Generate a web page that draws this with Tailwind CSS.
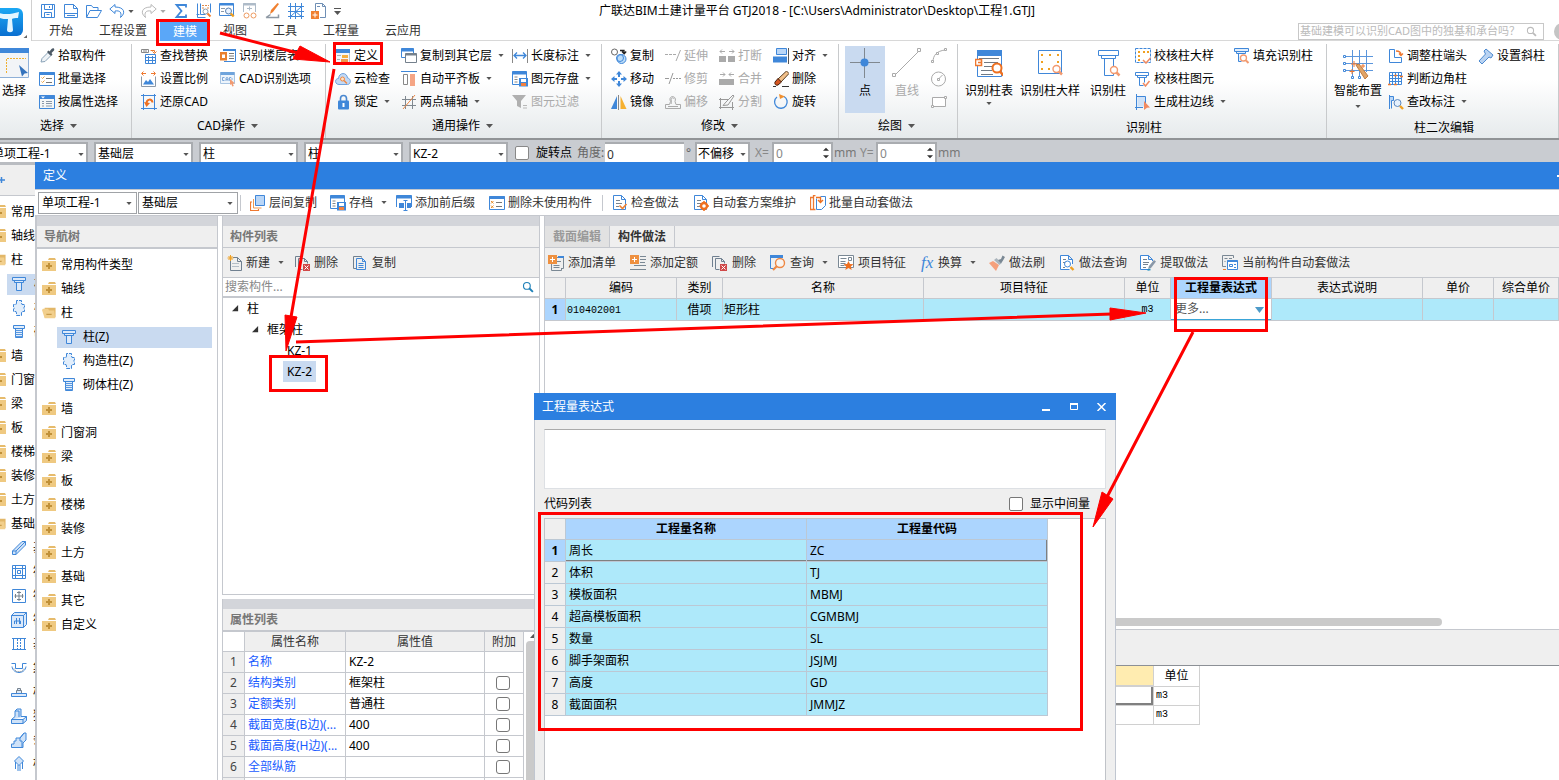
<!DOCTYPE html>
<html lang="zh-CN">
<head>
<meta charset="utf-8">
<title>广联达BIM土建计量平台 GTJ2018</title>
<script src="https://cdn.jsdelivr.net/npm/@tailwindcss/browser@4"></script>
</head>
<body class="relative flex h-screen w-full flex-col overflow-hidden bg-white font-['Noto_Sans','Noto_Sans_CJK_SC',sans-serif] text-[12px] leading-[16px] text-black">

<svg class="hidden">
<defs>
<symbol id="dd" viewBox="0 0 7 4"><path d="M0 0h7L3.500 4z" fill="#555"/></symbol>
<symbol id="save" viewBox="0 0 16 16" fill="none" stroke="#3f87d9"><path d="M1.500 1.500h13v13h-13zM4.500 1.500v5h8v-5M4.500 14.500v-5h7v5M9.500 3v2M6.500 11.500h3"/></symbol>
<symbol id="page" viewBox="0 0 16 16" fill="none" stroke="#3f87d9"><path d="M1.500 1.500h9l4 4v9h-13zM10.500 1.500v4h4M1.500 10.500h13M4 12.500h8"/></symbol>
<symbol id="open" viewBox="0 0 16 16" fill="none" stroke="#3f87d9"><path d="M.500 14V2.500h5l1.500 2h5v3M.500 14.500 4 7.500h11.500l-4 7z"/></symbol>
<symbol id="undo" viewBox="0 0 16 16" fill="none" stroke="#3f87d9"><path d="M6 1.500.800 6 6 10.500V8c5-.800 7 1.500 5.500 6.500C17 10 15.500 4 6 4z"/></symbol>
<symbol id="redo" viewBox="0 0 16 16" fill="none" stroke="#b9b9b9"><path d="M10 1.500 15.200 6 10 10.500V8c-5-.800-7 1.500-5.500 6.500C-1 10 .500 4 10 4z"/></symbol>
<symbol id="sum" viewBox="0 0 16 16" fill="none" stroke="#3f87d9" stroke-width="1.800"><path d="M13 4.500V2H3.500l5 6-5 6H13v-2.500"/></symbol>
<symbol id="qfind" viewBox="0 0 16 16" fill="none" stroke="#3f87d9"><path d="M1.500.500v14h8M4.500.500v11h5M.500 11.500h3M14.500.500v9"/><path d="M6 2.500h7M6 5h3M11 5h2" stroke="#e08a4a" stroke-dasharray="2 1"/><circle cx="9.500" cy="8.500" r="2.500" stroke="#8a98a8"/><path d="m11.500 10.500 3 3" stroke="#f08030" stroke-width="2"/></symbol>
<symbol id="qwin" viewBox="0 0 16 16" fill="none" stroke="#3f87d9"><path d="M.500.500h14v12H.500z"/><path d="M.500 1.500h14" stroke-width="2"/><path d="M2 5.500h4M2 8.500h3" stroke="#8a98a8"/><circle cx="9.500" cy="8" r="3" stroke="#5a80b0" fill="#eaf3ff"/><path d="m11.700 10.500 3 3" stroke="#f0a020" stroke-width="2.400"/></symbol>
<symbol id="glass" viewBox="0 0 16 16" fill="none" stroke="#aebbc8"><path d="M1.500 9V.500h12V9"/><path d="M1 1.500h13" stroke-width="2"/><path d="M5 5.500h5M7.500 3.500v4" /><circle cx="4.500" cy="12.500" r="2.500" stroke="#ee9a60"/><circle cx="11.500" cy="12.500" r="2.500" stroke="#ee9a60"/></symbol>
<symbol id="brush" viewBox="0 0 16 16"><path d="M14 1 8 9l-3 2 1-4 6.500-7z" fill="#f08030"/><path d="M1 14.500h12.500v-3M1 14.500l4.500-3" stroke="#8d98a3" fill="none" stroke-width="1.500"/></symbol>
<symbol id="mesh" viewBox="0 0 16 16" fill="none" stroke="#3f87d9"><path d="M2.500 0v16M7.500 0v16M13.500 0v16M0 3.500h16M0 8.500h16M0 13.500h16M2.500 13.500l11-10M7.500 8.500l6 5"/></symbol>
<symbol id="docplus" viewBox="0 0 16 16" fill="none" stroke="#6f8fb5"><path d="M4.500 8V.500h7l3 3v11H9M11.500.500v3h3M6 3.500h3"/><path d="M0 8h8v8H0z" fill="#f08030" stroke="none"/><path d="M4 9.500v5M1.500 12h5" stroke="#fff"/></symbol>
<symbol id="pick" viewBox="0 0 16 16"><path d="M2 14l1-3.500 6-6 3 3-6 6z" fill="#eef3f7" stroke="#8aa3b8"/><path d="m8 4 4 4 1.500-1.500L12.500 5 15 2.500c1-2-1-3-2.500-1.500L10.500 3.500 9.500 2.500z" fill="#4d5a66"/></symbol>
<symbol id="list" viewBox="0 0 16 16" fill="none" stroke="#3f87d9"><path d="M.500 1.500h15v13H.500z"/><path d="M.500 2.500h15" stroke-width="3"/><path d="m2.500 6.500 1 1 2-2M2.500 10.500l1 1 2-2" stroke="#e8a040"/><path d="M7 7.500h6M7 11.500h6" stroke="#777"/></symbol>
<symbol id="list2" viewBox="0 0 16 16" fill="none" stroke="#3f87d9"><path d="M.500 1.500h15v13H.500z"/><path d="M.500 3h15" stroke-width="4"/><path d="M2 2.500h4L4 4.500z" fill="#fff" stroke="none"/><path d="M3 7.500h2M7 7.500h6M3 9.500h2M7 9.500h6M3 12h2M7 12h6" stroke="#8a98a8"/></symbol>
<symbol id="replace" viewBox="0 0 16 16" fill="none" stroke="#3f87d9"><path d="M.500 1.500h7v3h-7zM3 1.500v3M5 1.500v3" stroke="#888"/><path d="M9.500 2.500h4v2M11.500 3.500l2 2 2-2" stroke="#e87a30"/><path d="M4.500 6.500h10v9h-10zM4.500 9.500h10M4.500 12.500h10M7.500 8v8M11.500 8v8"/></symbol>
<symbol id="scale" viewBox="0 0 16 16" fill="none" stroke="#8a98a8"><path d="M.500 5.500v10h14v-10"/><path d="M2 13.500 5 9l2 2 2-3 4 5.500z" fill="#3f87d9" stroke="none"/><path d="M5 2.500H1m1.500-2-2 2 2 2M10 2.500h4m-1.500-2 2 2-2 2" stroke="#ee7830"/></symbol>
<symbol id="restore" viewBox="0 0 16 16" fill="none" stroke="#3f87d9"><path d="M2.500 0v16M0 1.500h15M13.500 0v16M0 14.500h16"/><path d="M5.500 9.500C5.500 5 11 4 11.500 8.500" stroke="#ee7020" stroke-width="2"/><path d="m3 8 2.500 5L9 9z" fill="#ee7020" stroke="none"/></symbol>
<symbol id="floor" viewBox="0 0 16 16" fill="none" stroke="#3f87d9"><path d="M3.500 1.500h12v12H4"/><path d="M3 2h13" stroke-width="2"/><path d="M9 5.500h5M9 8h5M9 10.500h5" stroke="#777"/><path d="M0 4h7v8.500H0z" fill="#e8802f" stroke="none"/><path d="M2 6.500h3v3.500H2z" fill="#fff" stroke="none"/></symbol>
<symbol id="cadopt" viewBox="0 0 16 16" fill="none" stroke="#a8c4e2"><path d="M.500 1.500h14v11H.500z" fill="#edf4fb"/><path d="M.500 2.500h14" stroke-width="3" stroke="#6fa4dc"/><path d="M4.500 6.500h-2v3h2M6 10V7l1-.500L8 7v3M6 8.500h2M9.500 6.500h1.500l1 1v1l-1 1H9.500z" stroke="#7fa8d8"/><path d="m10 8 5 4.500h-2.200l1 2.500-1.500.500-1-2.500-1.300 1z" fill="#f29a70" stroke="none"/></symbol>
<symbol id="defn" viewBox="0 0 16 16"><path d="M0 1h15v4H0z" fill="#3f87d9"/><path d="M.500 5v9.500h14V5" fill="#f3f6fa" stroke="#b8c2cc"/><path d="M2 7.500h4M2 11.500h3" stroke="#a8b2bc"/><path d="M7 7h6v3H7z" fill="#f6b040"/><path d="M6 11h7v3H6z" fill="#ee9850"/></symbol>
<symbol id="cloud" viewBox="0 0 16 16"><path d="M4 13.500c-4.500 0-4.500-6-.500-6C4 1 12 1 12.500 7c4 .500 3.500 6.500 0 6.500z" fill="#c2d9f5" stroke="#6fa2de"/><circle cx="7.500" cy="8" r="2" fill="#ffe1c4" stroke="#ee8844"/><path d="m9 9.500 3 3" stroke="#ee8844" stroke-width="1.500"/></symbol>
<symbol id="lock" viewBox="0 0 16 16"><path d="M5.500 8V4.500c0-4 6-4 6 0V8" fill="none" stroke="#4a88d0" stroke-width="1.600"/><rect x="3" y="6.500" width="11" height="9" rx="1" fill="#3f87d9"/><path d="M8.500 9v4" stroke="#fff" stroke-width="2"/></symbol>
<symbol id="copyfl" viewBox="0 0 16 16" fill="#fff" stroke="#3f87d9"><path d="M.500.500h12v9H.500z"/><path d="M.500 2h12" stroke-width="3"/><path d="M4.500 5.500h11v9h-11z" stroke="#74808c"/><path d="M4.500 6.500h11" stroke="#74808c" stroke-width="2"/></symbol>
<symbol id="align1" viewBox="0 0 16 16" fill="none"><path d="M0 .500h16" stroke="#3f87d9"/><path d="M2.500 3.500h4v10h-4z" stroke="#888"/><path d="M9 3h5v12H9z" fill="#f5a585"/></symbol>
<symbol id="axis" viewBox="0 0 16 16" stroke="#808890" fill="none"><path d="M4.500 2v13M11.500 2v13M1 5.500h14M1 11.500h14"/><path d="M2 15 14 1" stroke="#ee8844"/></symbol>
<symbol id="dimen" viewBox="0 0 16 16" fill="none"><path d="M.500 1v14M15.500 1v14" stroke="#888"/><path d="M2 7.500h12M5 4.500l-3 3 3 3M11 4.500l3 3-3 3" stroke="#3f87d9" stroke-width="1.300"/></symbol>
<symbol id="store" viewBox="0 0 16 16" fill="none" stroke="#3f87d9"><path d="M.500.500h14v13H.500z"/><path d="M.500 2h14" stroke-width="3"/><path d="M2.500 6h3M2.500 8.500h3M2.500 11h3" stroke="#888"/><path d="M7 7h9v8.500H7z" fill="#3f87d9" stroke="none"/><path d="M9 8h5v3H9z" fill="#fff" stroke="none"/><path d="M9 12h5v3H9z" fill="#f08040" stroke="none"/></symbol>
<symbol id="filter" viewBox="0 0 16 16"><path d="M0 1h14L9 7v7l-4-2V7z" fill="#b0b0b0"/><path d="M11 11.500h4M11 14h4" stroke="#b8b8b8"/></symbol>
<symbol id="copy2" viewBox="0 0 16 16" fill="none"><circle cx="3.500" cy="4" r="3" stroke="#666"/><path d="M9 2.500h4v3M11 3.500l2.200 2.200 2-2.200" stroke="#222" stroke-width="1.300"/><circle cx="10.500" cy="11" r="4.500" fill="#bcdcf8" stroke="#3f87d9"/><circle cx="9" cy="10" r="3.500" stroke="#3f87d9"/></symbol>
<symbol id="move" viewBox="0 0 16 16" fill="#3f87d9"><path d="m8 0 3 3.500H9V6H7V3.500H5zM8 16l3-3.500H9V10H7v2.500H5zM0 8l3.500-3v2H6v2H3.500v2zM16 8l-3.500-3v2H10v2h2.500v2z"/></symbol>
<symbol id="mirror" viewBox="0 0 16 16"><path d="M6 2v13H0z" fill="#3f87d9"/><path d="M9.500 2v13h6z" fill="#f5b030"/><path d="M7.500 1v15" stroke="#888"/></symbol>
<symbol id="ext" viewBox="0 0 16 16" stroke="#aaa" fill="none"><path d="M0 6.500h3M4 6.500h3M8 6.500h3M11 13l4.500-11"/></symbol>
<symbol id="trim" viewBox="0 0 16 16" stroke="#999" fill="none"><path d="M0 7.500h4M4 13 8 2M8 7.500h2M11 7.500h2M14 7.500h2"/></symbol>
<symbol id="offs" viewBox="0 0 16 16" stroke="#aaa" fill="none"><path d="M.500 14.500v-4h4l1-3C2.500 1 12.500 1 10 7.500l1 3h4.500v4zM3 12.500h10M6 10c1-2 0-4 0-5 1-2 3-1 3 0"/></symbol>
<symbol id="brk" viewBox="0 0 16 16" fill="#aaa"><path d="M0 8h7v6H0zM9 8h7v6H9z"/><path d="M6 3.500H1m2-2-2 2 2 2M10 3.500h5m-2-2 2 2-2 2" stroke="#aaa" fill="none"/></symbol>
<symbol id="merge" viewBox="0 0 16 16" fill="#aaa"><path d="M0 8h15v6H0z"/><path d="M1 3.500h5m-2-2 2 2-2 2M15 3.500h-5m2-2-2 2 2 2" stroke="#aaa" fill="none"/></symbol>
<symbol id="split" viewBox="0 0 16 16" stroke="#999" fill="none"><path d="M1.500 4v11M0 5.500h9M0 13.500h15M13.500 8v8M4 11.500 9 11l6-9-1-1-7 7z"/></symbol>
<symbol id="algn" viewBox="0 0 16 16"><path d="M3.500.500h10v6h-10z" fill="#b9d6f7" stroke="#3f87d9"/><path d="M0 8.500h14v6H0z" fill="#3f87d9"/><path d="M15.500 0v16" stroke="#555"/></symbol>
<symbol id="erase" viewBox="0 0 16 16"><path d="M13.500 0 16 2.500 8 11 5 8z" fill="#f2c089" stroke="#553a20"/><path d="M5 7.500 8.500 11 5 14c-3 1-3.500-2-3-3z" fill="#d45520" stroke="#402010"/><path d="M0 15.500h3M9 15.500h7" stroke="#333"/></symbol>
<symbol id="rot" viewBox="0 0 16 16" fill="none"><path d="M11 2.500A6.300 6.300 0 1 1 4 3" stroke="#3f87d9" stroke-width="1.300"/><path d="m6 0 6 2.500L7 5z" fill="#f09030"/></symbol>
<symbol id="point" viewBox="0 0 30 30"><path d="M14.500 0v30M0 14.500h30" stroke="#808890"/><circle cx="14.500" cy="14.500" r="4" fill="#3f87d9"/></symbol>
<symbol id="line" viewBox="0 0 30 30" fill="#fff" stroke="#aaa"><path d="M3 27 27 3"/><path d="M.500 25.500h3v3h-3zM25.500.500h3v3h-3z"/></symbol>
<symbol id="arc" viewBox="0 0 16 16" fill="#fff" stroke="#aaa"><path d="M2 14C2 7 6 3 14 2" fill="none"/><path d="M.500 12.500h2v2h-2zM5.500 4.500h2v2h-2zM13.500.500h2v2h-2z"/></symbol>
<symbol id="circ" viewBox="0 0 16 16" fill="none" stroke="#aaa"><circle cx="7.500" cy="8" r="7"/><path d="m7.500 8 4-4M6.500 7.500h2v2h-2z"/></symbol>
<symbol id="rect" viewBox="0 0 16 16" fill="#fff" stroke="#aaa"><path d="M1.500 3.500h13v9h-13z"/><path d="M.500 11.500h2v2h-2zM13.500 2.500h2v2h-2z"/></symbol>
<symbol id="zbiao" viewBox="0 0 28 28" fill="none"><path d="M2.500 1v25.500h24V1" stroke="#3f87d9"/><path d="M2 0h25v6H2z" fill="#3f87d9"/><path d="M4 8.500h20M9 12.500h14M9 16.500h9M6 20.500h11M6 24.500h12" stroke="#707a84"/><path d="M.500 9.500h6v6h-6zM3 12.500h3.500" fill="#fff" stroke="#ee7830" stroke-width="1.600"/><circle cx="22" cy="18" r="4.500" fill="#fff" stroke="#ee7020" stroke-width="2"/><path d="m25 21.500 3.500 4" stroke="#ee7020" stroke-width="2.500"/></symbol>
<symbol id="zda" viewBox="0 0 28 28" fill="none"><path d="M2.500.500h23v23h-23z" stroke="#3f87d9"/><path d="M5 4h2v2H5zM13 4h2v2h-2zM21 4h2v2h-2zM5 11h2v2H5zM5 18h2v2H5zM12 18h2v2h-2zM21 11h2v2h-2z" fill="#f0a020"/><circle cx="20.500" cy="19" r="3.500" fill="#fff" stroke="#f29a70" stroke-width="1.400"/><path d="m23 21.500 3 3" stroke="#f29a70" stroke-width="2.500"/></symbol>
<symbol id="zzhu" viewBox="0 0 28 28" fill="none"><path d="M4.500.500h20v5h-20zM7.500 5.500h14v3h-14zM10.500 8.500v17h9v-17" stroke="#3f87d9"/><circle cx="20" cy="20" r="3.500" fill="#fff" stroke="#f29a70" stroke-width="1.400"/><path d="m22.500 22.500 3 3" stroke="#f29a70" stroke-width="2.500"/></symbol>
<symbol id="chk1" viewBox="0 0 16 16" fill="none"><path d="M.500.500h15v14H.500z" stroke="#3f87d9" stroke-dasharray="3 1"/><path d="M3 3h2v2H3zM8 3h2v2H8zM12 3h2v2h-2zM3 7h2v2H3zM3 11h2v2H3z" fill="#f0a020"/><path d="m8 12 3 3 4.500-5" stroke="#f08a60" stroke-width="1.500"/></symbol>
<symbol id="chk2" viewBox="0 0 16 16" fill="none"><path d="M.500 1.500h13v3H.500zM2.500 4.500h9v2h-9zM4.500 6.500v8h4M9.500 6.500v5" stroke="#3f87d9"/><path d="m8 12 2.500 3 4-5" stroke="#f08a60" stroke-width="1.500"/></symbol>
<symbol id="gen" viewBox="0 0 16 16" fill="none"><path d="M2.500 2.500h8v10h-8z" fill="#cfe2f8"/><path d="M1.500 0v16M1 2.500h9.500v8M0 13.500h8" stroke="#3f87d9"/><path d="m9 7 6 6.500-3 .200L9 16z" fill="#f28a60"/></symbol>
<symbol id="fillz" viewBox="0 0 16 16" fill="none"><path d="M.500.500h14v3H.500zM2.500 3.500h9v2h-9zM4.500 5.500v8h3" stroke="#3f87d9" fill="#e2eefb"/><circle cx="9.500" cy="10" r="3" fill="#fff" stroke="#f29a70" stroke-width="1.300"/><path d="m12 12.500 2.500 2.500" stroke="#f29a70" stroke-width="2"/></symbol>
<symbol id="smart" viewBox="0 0 30 30" fill="none"><path d="M9.500 0v26M16.500 0v26M23.500 0v22M2 6.500h28M2 13.500h28M2 20.500h28" stroke="#5b96dc"/><path d="M.500 5.500h2v2h-2zM.500 12.500h2v2h-2zM.500 19.500h2v2h-2zM8.500 26.500h2v2h-2zM15.500 26.500h2v2h-2z" fill="#fff" stroke="#3f87d9"/><path d="m13 15 3-1 9 12-3 3z" fill="#e0a468" stroke="#c07c40"/><path d="M11 11v6M8 14h6M9 19v5M6.500 21.500h5M20 14v4M18 16h4" stroke="#f07830"/></symbol>
<symbol id="adj" viewBox="0 0 16 16" fill="none"><path d="M1.500 1.500h5v8h7v5h-12z" stroke="#3f87d9"/><path d="M8 3c3 0 5 1.500 5 4M11 5.500l2 2 2-2" stroke="#ee7830" stroke-width="1.300"/></symbol>
<symbol id="corner" viewBox="0 0 16 16" fill="none"><path d="M1.500 1.500h12v12h-12zM4.500 1.500v12M7.500 1.500v12M10.500 1.500v12M1.500 4.500h12M1.500 7.500h12M1.500 10.500h12" stroke="#3f87d9"/><path d="M0 13.500h3M6 13.500h3M6 4.500h3M12 5.500h3" stroke="#ee7830" stroke-width="1.500"/></symbol>
<symbol id="modi" viewBox="0 0 16 16" fill="none"><path d="M1.500 1v14M1.500 2.500h4v4h-2v8" stroke="#3f87d9" fill="#b9d6f7"/><circle cx="9.500" cy="9" r="3.500" fill="#e6f1fd" stroke="#5a88c0"/><path d="m12 12 3 3" stroke="#f0a020" stroke-width="2.400"/></symbol>
<symbol id="incl" viewBox="0 0 16 16"><path d="m6 3 2-2 7 6-2 3-2-1-7 7-3-3 6.500-7z" fill="#b9d3f2" stroke="#4d8ad0"/></symbol>
<symbol id="search" viewBox="0 0 16 16" fill="none" stroke="currentColor"><circle cx="6.500" cy="6.500" r="4.500" stroke-width="1.500"/><path d="m10 10 4.500 4.500" stroke-width="2.500"/></symbol>
<symbol id="folder" viewBox="0 0 14 14"><path d="M7 0h6l1 2H6z" fill="#e6bb6c"/><path d="M0 3h14v10H0z" fill="#efc981"/><path d="M7 5v6M4 8h6" stroke="#c09038" stroke-width="2"/></symbol>
<symbol id="foldo" viewBox="0 0 16 14"><path d="M3 1h12.500v11H3z" fill="#e2b768"/><path d="M0 3.500 1 2h6l1 2h6l1 9H3z" fill="#f2cf8c"/><path d="M5 8.500h6" stroke="#b88830"/></symbol>
<symbol id="col" viewBox="0 0 14 16"><path d="M.500 1.500h13v3H.500zM2.500 4.500h9v2h-9zM4.500 6.500h5v8h-5z" fill="#dbe9fa" stroke="#3f87d9"/></symbol>
<symbol id="gcol" viewBox="0 0 14 16"><path d="M4.500 3V.500h5V3l.500 1.500h2.500v2.500l-1 1 1 1v2.500H10L9.500 13v2.500h-5V13L4 11.500H1.500V9l1-1-1-1V4.500H4z" fill="#e2eefb" stroke="#3f87d9" stroke-dasharray="4 1"/></symbol>
<symbol id="bcol" viewBox="0 0 14 16"><path d="M1.500 1.500h11v3h-11zM3.500 4.500h7v9h-7z" fill="#e2eefb" stroke="#3f87d9"/><path d="M3.500 6.500h7M3.500 8.500h7M3.500 10.500h7M3.500 12.500h7" stroke="#5a98e0"/></symbol>
<symbol id="beam" viewBox="0 0 16 16" fill="#cfe2f8" stroke="#3f87d9"><path d="M1.500 11 11 1.500h3.500V5L5 14.500H1.500zM1.500 11H5v3.500M5 11l9.500-9.500"/></symbol>
<symbol id="raft" viewBox="0 0 16 16" fill="none" stroke="#3f87d9"><path d="M1.500 1.500h13v13h-13zM4.500 4.500h7v7h-7zM4.500 1v14M11.500 1v14M1 4.500h14M1 11.500h14M6.500 6.500h3v3h-3z"/></symbol>
<symbol id="cross" viewBox="0 0 16 16" fill="none"><path d="M1.500 1.500h13v13h-13z" stroke="#3f87d9"/><path d="M8 3v10M3.500 8h9M6 4.500h4M6 11.500h4M4.500 6v4M11.500 6v4" stroke="#77838f"/></symbol>
<symbol id="box3" viewBox="0 0 16 16" fill="#dbe9fa" stroke="#3f87d9"><path d="m.500 3.500 3-3h12v12l-3 3M.500 3.500h12v12H.500zM12.500 3.500l3-3M3.500 12V9h6v3M5.500 6v6M8.500 6v6" /></symbol>
<symbol id="strip" viewBox="0 0 16 16" fill="none" stroke="#3f87d9"><path d="M1 2.500h14M1 13.500h14M2.500 3v10M13.500 3v10"/><path d="M6.500 3v10M9.500 3v10" stroke-dasharray="2 1"/></symbol>
<symbol id="pit" viewBox="0 0 16 16" fill="none"><path d="M.500 3.500h4v5h7v-5h4" stroke="#3f87d9"/><path d="M1 6.500c1 8 13 8 14 0" stroke="#3f87d9"/><path d="M3 8.500l2 3h6l2-3" stroke="#77838f" stroke-dasharray="1 1"/></symbol>
<symbol id="cush" viewBox="0 0 16 16" fill="#dbe9fa" stroke="#3f87d9"><path d="M.500 9.500h15v3H.500z"/><path d="M5.500 9V6.500h5V9M6.500 6.500V4.500h3v2" stroke="#77838f"/></symbol>
<symbol id="foot" viewBox="0 0 16 16" fill="#cfe2f8" stroke="#3f87d9"><path d="M.500 11.500 4 8.500V3l2-2h4v7.500h5.500L12 11.500zM.500 11.500v4H12l3.500-3v-4M12 11.500v4M4 3h4v6"/></symbol>
<symbol id="foot2" viewBox="0 0 16 16" fill="#cfe2f8" stroke="#3f87d9"><path d="M.500 15.500V12H3V9h2V6h4l4-5h2v7l-3 3v4.500zM9 6v3h2v6M9 6l4-5"/></symbol>
<symbol id="pile" viewBox="0 0 16 16" fill="#cfe2f8" stroke="#3f87d9"><path d="m8 .500 4.500 4.500L8 9.500 3.500 5zM4.500 6v7M11.500 6v7M7 9v6M9 9v6"/></symbol>
<symbol id="layers" viewBox="0 0 16 16" fill="none"><path d="M2 7H.500v8.500h8V14" stroke="#ee7830" stroke-width="1.200"/><path d="M3.500 4v9h8" stroke="#ee9850"/><path d="M5.500.500h9v10h-9z" fill="#b9d6f7" stroke="#3f87d9"/></symbol>
<symbol id="prefix" viewBox="0 0 16 16" fill="none" stroke="#3f87d9"><path d="M.500 12V.500h15V12"/><path d="M.500 2h15" stroke-width="3"/><path d="M9.500 5v11M7.500 5.500h4M7.500 15.500h4"/><path d="M3 8h5v5H3zM11 8h4v5h-4z" fill="#3f87d9" stroke="none"/></symbol>
<symbol id="delun" viewBox="0 0 16 16" fill="none" stroke="#3f87d9"><path d="M.500 1.500h15v13H.500z"/><path d="M.500 2.500h15" stroke-width="3"/><path d="m2 6 2.500 2.500m0-2.500L2 8.500M2 10.500 4.500 13m0-2.500L2 13" stroke="#e8902f"/><path d="M7 7.500h6M7 11.500h6" stroke="#777"/></symbol>
<symbol id="dcheck" viewBox="0 0 16 16" fill="none"><path d="M1.500.500h8l4 4v10h-12zM9.500.500v4h4" fill="#fff" stroke="#3f87d9"/><path d="M4 5.500h4M4 8.500h6M4 11.500h3" stroke="#77838f"/><path d="m7.500 10.500 3 3 4-4.500" stroke="#ee8030" stroke-width="1.600"/></symbol>
<symbol id="dgear" viewBox="0 0 16 16" fill="none"><path d="M1.500.500h8l4 4v10h-12zM9.500.500v4h4" fill="#fff" stroke="#3f87d9"/><path d="M4 5.500h4M4 8.500h4M4 11.500h3" stroke="#77838f"/><circle cx="11" cy="11" r="3" fill="#fff" stroke="#ee7020" stroke-width="2.400"/><path d="M11 6v2M11 14v2M6.500 11h2M13.500 11h2.500" stroke="#ee7020" stroke-width="1.500"/></symbol>
<symbol id="batch" viewBox="0 0 16 16" fill="none"><path d="M3 2.500H.500v12H3M5.500.500h-2v14h2" stroke="#ee7830" stroke-width="1.300"/><path d="M6.500 3.500v11h5l4-4v-9h-5" fill="#fff" stroke="#3f87d9"/><path d="M6 2.500h4.500V7M8 5l2.500 2.500L13 5" stroke="#ee7020" stroke-width="1.400"/></symbol>
<symbol id="newdoc" viewBox="0 0 16 16" fill="none"><path d="M3.500 5.500v10h11v-9l-4-4H6M10.500 2.500v4h4" stroke="#708090"/><path d="M5 8.500h7M5 11.500h7" stroke="#b4bec8"/><path d="M3.500 0v6M.500 3h6M1.500 1l4 4M5.500 1l-4 4" stroke="#f0a020"/></symbol>
<symbol id="deldoc" viewBox="0 0 16 16" fill="none"><path d="M.500 12V1.500h7M3.500 14V3.500h6l3 3v2M3.500 14.500h4M9.500 3.500v3h3" stroke="#708090"/><path d="M8 9h7v7H8z" fill="#d04848"/><path d="m9.500 10.500 4 4m0-4-4 4" stroke="#fff"/></symbol>
<symbol id="cpdoc" viewBox="0 0 16 16" fill="none" stroke="#3f87d9"><path d="M3 13.500H.500V1.500h8v1" stroke="#708090"/><path d="M3.500 3.500h6l3 3v8h-9zM9.500 3.500v3h3M5.500 8.500h5M5.500 10.500h5M5.500 12.500h5"/></symbol>
<symbol id="addl" viewBox="0 0 16 16" fill="none"><path d="M3.500 8v7.500h10V14M9 2.500h6.500v11H13M5.500 10.500h6M5.500 12.500h6M9 6.500h4" stroke="#7a8894"/><path d="M10 1h6v2h-6z" fill="#3f87d9"/><path d="M0 0h9v9H0z" fill="#ee9040"/><path d="M4.500 2v5M2 4.500h5" stroke="#fff"/></symbol>
<symbol id="addq" viewBox="0 0 16 16" fill="none"><path d="M10 1.500h6M10 4.500h6M10 7.500h5M4 10.500h12M0 14.500h16" stroke="#7a8894"/><path d="M0 0h9v9H0z" fill="#ee9040"/><path d="M4.500 2v5M2 4.500h5" stroke="#fff"/></symbol>
<symbol id="query" viewBox="0 0 16 16" fill="none"><path d="M4 13.500H.500V1h12v2" stroke="#3f87d9"/><path d="M0 0h13v3H0z" fill="#3f87d9"/><circle cx="10" cy="8" r="4.500" fill="#f8f4f0" stroke="#ee8844" stroke-width="1.400"/><path d="m7 11-4 4" stroke="#ee8844" stroke-width="2.200"/></symbol>
<symbol id="feat" viewBox="0 0 16 16" fill="none"><path d="M.500.500h15v12H.500z" fill="#fff" stroke="#7a8894"/><path d="M2.500 3.500h6M2.500 6.500h5M2.500 8.500h5M2.500 10.500h4M10.500 2.500h3v3h-3z" stroke="#7a8894"/><path d="m10.500 6 1.500 3 3.500.200-2.700 2.300.900 3.500-3.200-2-3.200 2 .900-3.500L5.500 9.200 9 9z" fill="#ee7020"/></symbol>
<symbol id="mbrush" viewBox="0 0 16 16"><path d="m0 8 4-2 6 4-3 6z" fill="#f5a07c"/><path d="m5 5 2.500-2 5 5-2 2z" fill="#aab4bc"/><path d="m9 5 3-1 1.500-3.500L16 2l-2 3.500-2 3z" fill="#7a8894"/></symbol>
<symbol id="dq" viewBox="0 0 16 16" fill="none"><path d="M10.500 14.500h-9V.500h8l4 4V9M9.500.500v4h4" fill="#fff" stroke="#3f87d9"/><path d="M4 4.500h3M4 7.500h2M4 12.500h2" stroke="#77838f"/><circle cx="8.500" cy="9" r="3" stroke="#3f87d9"/><path d="m11.500 12 3 3" stroke="#f0a020" stroke-width="2.400"/></symbol>
<symbol id="ext2" viewBox="0 0 16 16" fill="none"><path d="M8.500 14.500h-8V.500h8l4 4V6M8.500.500v4h4" fill="#fff" stroke="#3f87d9"/><path d="M3 4.500h4M3 7.500h6M3 9.500h5M3 12.500h3" stroke="#77838f"/><path d="m8 14 1-3 5-6 2 1.500L11 13z" fill="#8a98a8"/><path d="m7.500 15 3-.500" stroke="#2090c0" stroke-width="1.500"/></symbol>
<symbol id="cur" viewBox="0 0 16 16" fill="none"><path d="M4 11.500H.500v-11h11V3M2.500 3.500h3M7 3.500h3M2.500 6.500h1" stroke="#7a8894"/><path d="M1 14.500h3" stroke="#ee8030"/><path d="M5.500 5.500h10v9h-10z" fill="#fff" stroke="#3f87d9"/><path d="M5.500 6h10" stroke="#3f87d9" stroke-width="2"/><path d="M7.500 9.500h3v2h-3zM12 9.500h2M12 12.500h2" stroke="#3f87d9"/></symbol>
<symbol id="spin" viewBox="0 0 7 12"><path d="M0 3.500 3.500 0 7 3.500zM0 8.500h7L3.500 12z" fill="#333"/></symbol>
<symbol id="tri" viewBox="0 0 8 8"><path d="M7 0v7H0z" fill="#333"/></symbol>
</defs>
</svg>

<!-- application header -->
<header class="flex h-[41px] shrink-0">
  <div class="flex w-8 shrink-0 items-start border-r border-[#d0d0d0] pt-2">
    <svg class="h-[30px] w-[28px]" viewBox="0 0 28 30"><defs><linearGradient id="lg" x1="0" y1="0" x2="0" y2="1"><stop offset="0" stop-color="#1ba8f4"/><stop offset="1" stop-color="#0a6fd0"/></linearGradient></defs><rect x="-6" y="0" width="29" height="28" rx="6" fill="url(#lg)"/><path d="M-1 5c7 2 13 1 20-1l-1 6c-3 0-5 0-6 1l1 11c0 3-6 3-6 0l1-11c-3 0-6 0-8-1z" fill="#e4f6ff"/><path d="M27 27v3.500h-4z" fill="#666"/></svg>
  </div>
  <div class="flex min-w-0 flex-1 flex-col">
    <div class="flex h-[22px] items-center">
      <div class="flex w-[567px] shrink-0 items-center pl-2">
        <div class="flex items-center gap-[7px] *:flex *:items-center *:gap-[3px]">
          <button aria-label="保存"><svg class="size-4"><use href="#save"/></svg></button>
          <button aria-label="新建"><svg class="size-4"><use href="#page"/></svg></button>
          <button aria-label="打开"><svg class="size-4"><use href="#open"/></svg></button>
          <button aria-label="撤销"><svg class="size-4"><use href="#undo"/></svg><svg class="h-[3px] w-[6px]"><use href="#dd"/></svg></button>
          <button aria-label="重做"><svg class="size-4"><use href="#redo"/></svg><svg class="h-[3px] w-[6px] opacity-50"><use href="#dd"/></svg></button>
          <button aria-label="汇总"><svg class="size-4"><use href="#sum"/></svg></button>
          <button aria-label="查找图元"><svg class="size-4"><use href="#qfind"/></svg></button>
          <button aria-label="查看"><svg class="size-4"><use href="#qwin"/></svg></button>
          <button aria-label="预览"><svg class="size-4"><use href="#glass"/></svg></button>
          <button aria-label="刷"><svg class="size-4"><use href="#brush"/></svg></button>
          <button aria-label="网格"><svg class="size-4"><use href="#mesh"/></svg></button>
          <button aria-label="导入"><svg class="size-4"><use href="#docplus"/></svg></button>
          <button aria-label="更多"><svg class="h-[7px] w-[7px]" viewBox="0 0 7 7"><path d="M0 .500h7" stroke="#555"/><path d="M0 3h7L3.500 7z" fill="#555"/></svg></button>
        </div>
      </div>
      <h1 class="whitespace-nowrap">广联达BIM土建计量平台 GTJ2018 - [C:\Users\Administrator\Desktop\工程1.GTJ]</h1>
    </div>
    <nav class="flex h-[19px] items-center border-b border-[#d8d8d8] pl-1 text-[#333]">
      <a href="#" class="px-[13px]">开始</a>
      <a href="#" class="px-[13px]">工程设置</a>
      <a href="#" class="bg-[#5aa7f8] px-[13px] leading-[19px] text-white">建模</a>
      <a href="#" class="px-[13px]">视图</a>
      <a href="#" class="px-[13px]">工具</a>
      <a href="#" class="px-[13px]">工程量</a>
      <a href="#" class="px-[13px]">云应用</a>
      <label class="mr-[10px] ml-auto flex h-[17px] w-[246px] shrink-0 items-center border border-[#c8c8c8] bg-white pr-[6px] pl-px text-[#bbb]">
        <input aria-label="帮助搜索" class="min-w-0 flex-1 text-[11px] leading-[14px] text-[#777] placeholder:text-[#bbb]" placeholder="基础建模可以识别CAD图中的独基和承台吗？">
        <svg class="size-[11px]"><use href="#search"/></svg>
      </label>
      <span class="-mr-3 size-[17px] shrink-0 rounded-full bg-[#c4c4c4]"></span>
    </nav>
  </div>
</header>

<!-- ribbon -->
<section class="flex h-[97px] shrink-0 overflow-hidden bg-linear-to-b from-white from-40% to-[#e6eaec] pt-[3px] whitespace-nowrap *:flex *:shrink-0 *:flex-col *:border-r *:border-[#c8cacc]">
  <div class="w-[132px]">
    <div class="flex">
      <button class="flex w-[39px] flex-col items-start pt-1"><svg class="h-[30px] w-[29px]" viewBox="0 0 29 30"><path d="M-2 .500h30.500v29H-2z" fill="#f2f4f7" stroke="#8fb0d8"/><path d="M-2 0h31v5H-2z" fill="#3f87d9"/><path d="M6.500 25V10.500H26" stroke="#f0b030" fill="none" stroke-dasharray="2 1"/><path d="m19 17 9 8-3.500.500-2.500 3z" fill="#3573bd"/></svg><span class="mt-[5px] pl-[2px]">选择</span></button>
      <div class="flex flex-col *:flex *:h-[23px] *:items-center *:gap-[3px]">
        <button><svg class="size-4"><use href="#pick"/></svg>拾取构件</button>
        <button><svg class="size-4"><use href="#list"/></svg>批量选择</button>
        <button><svg class="size-4"><use href="#list2"/></svg>按属性选择</button>
      </div>
    </div>
    <p class="flex flex-1 items-center gap-[6px] pl-10">选择<svg class="h-1 w-[7px]"><use href="#dd"/></svg></p>
  </div>
  <div class="w-[194px]">
    <div class="flex pl-[9px] *:flex *:flex-col *:*:flex *:*:h-[23px] *:*:items-center *:*:gap-[3px]">
      <div class="w-[79px]">
        <button><svg class="size-4"><use href="#replace"/></svg>查找替换</button>
        <button><svg class="size-4"><use href="#scale"/></svg>设置比例</button>
        <button><svg class="size-4"><use href="#restore"/></svg>还原CAD</button>
      </div>
      <div>
        <button><svg class="size-4"><use href="#floor"/></svg>识别楼层表</button>
        <button><svg class="size-4"><use href="#cadopt"/></svg>CAD识别选项</button>
      </div>
    </div>
    <p class="flex flex-1 items-center gap-[6px] pl-[65px]">CAD操作<svg class="h-1 w-[7px]"><use href="#dd"/></svg></p>
  </div>
  <div class="w-[276px]">
    <div class="flex pl-[9px] *:flex *:flex-col *:*:flex *:*:h-[23px] *:*:items-center *:*:gap-[3px]">
      <div class="w-[66px]">
        <button><svg class="size-4"><use href="#defn"/></svg>定义</button>
        <button><svg class="size-4"><use href="#cloud"/></svg>云检查</button>
        <button><svg class="size-4"><use href="#lock"/></svg>锁定<svg class="ml-[3px] h-[3px] w-[6px]"><use href="#dd"/></svg></button>
      </div>
      <div class="w-[111px]">
        <button><svg class="size-4"><use href="#copyfl"/></svg>复制到其它层<svg class="ml-[3px] h-[3px] w-[6px]"><use href="#dd"/></svg></button>
        <button><svg class="size-4"><use href="#align1"/></svg>自动平齐板<svg class="ml-[3px] h-[3px] w-[6px]"><use href="#dd"/></svg></button>
        <button><svg class="size-4"><use href="#axis"/></svg>两点辅轴<svg class="ml-[3px] h-[3px] w-[6px]"><use href="#dd"/></svg></button>
      </div>
      <div>
        <button><svg class="size-4"><use href="#dimen"/></svg>长度标注<svg class="ml-[3px] h-[3px] w-[6px]"><use href="#dd"/></svg></button>
        <button><svg class="size-4"><use href="#store"/></svg>图元存盘<svg class="ml-[3px] h-[3px] w-[6px]"><use href="#dd"/></svg></button>
        <button class="text-[#aaa]"><svg class="size-4"><use href="#filter"/></svg>图元过滤</button>
      </div>
    </div>
    <p class="flex flex-1 items-center gap-[6px] pl-[106px]">通用操作<svg class="h-1 w-[7px]"><use href="#dd"/></svg></p>
  </div>
  <div class="w-[237px]">
    <div class="flex pl-[9px] *:flex *:w-[54px] *:flex-col *:*:flex *:*:h-[23px] *:*:items-center *:*:gap-[3px]">
      <div>
        <button><svg class="size-4"><use href="#copy2"/></svg>复制</button>
        <button><svg class="size-4"><use href="#move"/></svg>移动</button>
        <button><svg class="size-4"><use href="#mirror"/></svg>镜像</button>
      </div>
      <div class="text-[#aaa]">
        <button><svg class="size-4"><use href="#ext"/></svg>延伸</button>
        <button><svg class="size-4"><use href="#trim"/></svg>修剪</button>
        <button><svg class="size-4"><use href="#offs"/></svg>偏移</button>
      </div>
      <div class="text-[#aaa]">
        <button><svg class="size-4"><use href="#brk"/></svg>打断</button>
        <button><svg class="size-4"><use href="#merge"/></svg>合并</button>
        <button><svg class="size-4"><use href="#split"/></svg>分割</button>
      </div>
      <div>
        <button><svg class="size-4 shrink-0"><use href="#algn"/></svg>对齐<svg class="ml-[3px] h-[3px] w-[6px] shrink-0"><use href="#dd"/></svg></button>
        <button><svg class="size-4"><use href="#erase"/></svg>删除</button>
        <button><svg class="size-4"><use href="#rot"/></svg>旋转</button>
      </div>
    </div>
    <p class="flex flex-1 items-center gap-[6px] pl-[99px]">修改<svg class="h-1 w-[7px]"><use href="#dd"/></svg></p>
  </div>
  <div class="w-[119px]">
    <div class="flex pl-[6px]">
      <button class="mt-[2px] flex h-[67px] w-10 flex-col items-center bg-[#c9daf0] pt-[2px]"><svg class="size-[30px]"><use href="#point"/></svg><span class="mt-[5px]">点</span></button>
      <button class="flex w-[44px] flex-col items-center pt-1 text-[#aaa]"><svg class="size-[30px]"><use href="#line"/></svg><span class="mt-[5px]">直线</span></button>
      <div class="flex flex-col pl-[2px] *:flex *:h-[23px] *:items-center">
        <button aria-label="弧线"><svg class="size-4"><use href="#arc"/></svg></button>
        <button aria-label="圆"><svg class="size-4"><use href="#circ"/></svg></button>
        <button aria-label="矩形"><svg class="size-4"><use href="#rect"/></svg></button>
      </div>
    </div>
    <p class="flex flex-1 items-center gap-[6px] pl-[39px]">绘图<svg class="h-1 w-[7px]"><use href="#dd"/></svg></p>
  </div>
  <div class="w-[369px]">
    <div class="flex pl-[7px]">
      <div class="flex gap-[7px] pr-[9px] *:flex *:flex-col *:items-center *:pt-[6px]">
        <button><svg class="size-[28px]"><use href="#zbiao"/></svg><span class="mt-[5px]">识别柱表</span><svg class="mt-[3px] h-[3px] w-[6px]"><use href="#dd"/></svg></button>
        <button><svg class="size-[28px]"><use href="#zda"/></svg><span class="mt-[5px]">识别柱大样</span></button>
        <button class="ml-[3px]"><svg class="size-[28px]"><use href="#zzhu"/></svg><span class="mt-[5px]">识别柱</span></button>
      </div>
      <div class="flex w-[99px] flex-col *:flex *:h-[23px] *:items-center *:gap-[3px]">
        <button><svg class="size-4"><use href="#chk1"/></svg>校核柱大样</button>
        <button><svg class="size-4"><use href="#chk2"/></svg>校核柱图元</button>
        <button><svg class="size-4"><use href="#gen"/></svg>生成柱边线<svg class="ml-[3px] h-[3px] w-[6px]"><use href="#dd"/></svg></button>
      </div>
      <button class="flex h-[23px] items-center gap-[3px]"><svg class="size-4"><use href="#fillz"/></svg>填充识别柱</button>
    </div>
    <p class="flex flex-1 items-center pt-1 pl-[168px]">识别柱</p>
  </div>
  <div class="w-[232px]">
    <div class="flex pl-[7px]">
      <button class="mr-[6px] flex flex-col items-center pt-[6px]"><svg class="size-[30px]"><use href="#smart"/></svg><span class="mt-[3px]">智能布置</span><svg class="mt-[6px] h-[3px] w-[6px]"><use href="#dd"/></svg></button>
      <div class="flex w-[90px] flex-col *:flex *:h-[23px] *:items-center *:gap-[3px]">
        <button><svg class="size-4"><use href="#adj"/></svg>调整柱端头</button>
        <button><svg class="size-4"><use href="#corner"/></svg>判断边角柱</button>
        <button><svg class="size-4"><use href="#modi"/></svg>查改标注<svg class="ml-[3px] h-[3px] w-[6px]"><use href="#dd"/></svg></button>
      </div>
      <button class="flex h-[23px] items-center gap-[3px]"><svg class="size-4"><use href="#incl"/></svg>设置斜柱</button>
    </div>
    <p class="flex flex-1 items-center pt-1 pl-[87px]">柱二次编辑</p>
  </div>
</section>

<!-- option bar -->
<section class="flex h-6 shrink-0 items-start overflow-hidden border-t-2 border-[#909396] bg-[#c9ccd1] pt-[2px] leading-5 whitespace-nowrap">
  <div class="relative mr-[6px] w-[88px] shrink-0 overflow-hidden border-2 border-l-0 border-[#a9acb0] bg-white"><select aria-label="工程" class="-ml-2 h-5 w-full appearance-none"><option>单项工程-1</option></select><svg class="absolute top-[9px] right-[2px] h-[3px] w-[6px]"><use href="#dd"/></svg></div>
  <div class="relative mr-[6px] w-[99px] shrink-0 border-2 border-[#a9acb0] bg-white pl-[2px]"><select aria-label="楼层" class="h-5 w-full appearance-none"><option>基础层</option></select><svg class="absolute top-[9px] right-[2px] h-[3px] w-[6px]"><use href="#dd"/></svg></div>
  <div class="relative mr-[6px] w-[99px] shrink-0 border-2 border-[#a9acb0] bg-white pl-[2px]"><select aria-label="构件类别" class="h-5 w-full appearance-none"><option>柱</option></select><svg class="absolute top-[9px] right-[2px] h-[3px] w-[6px]"><use href="#dd"/></svg></div>
  <div class="relative mr-[6px] w-[99px] shrink-0 border-2 border-[#a9acb0] bg-white pl-[2px]"><select aria-label="构件类型" class="h-5 w-full appearance-none"><option>柱</option></select><svg class="absolute top-[9px] right-[2px] h-[3px] w-[6px]"><use href="#dd"/></svg></div>
  <div class="relative mr-[7px] w-[99px] shrink-0 border-2 border-[#a9acb0] bg-white pl-[2px]"><select aria-label="构件" class="h-5 w-full appearance-none"><option>KZ-2</option></select><svg class="absolute top-[9px] right-[2px] h-[3px] w-[6px]"><use href="#dd"/></svg></div>
  <label class="flex shrink-0 items-center gap-[7px] pt-px"><input type="checkbox" class="size-[14px] appearance-none rounded-[2px] border border-[#888] bg-white">旋转点</label>
  <label class="ml-[5px] flex shrink-0 text-[#666]"><span class="w-7 pt-px">角度:</span><input value="0" class="h-[22px] w-[79px] border-t-2 border-[#a9acb0] bg-white pl-[2px] text-[#333]"></label>
  <span class="w-[11px] pt-px pl-[2px] text-[#666]">°</span>
  <div class="relative mr-[5px] w-[55px] shrink-0 border-2 border-[#a9acb0] bg-white pl-px"><select aria-label="偏移" class="h-5 w-full appearance-none"><option>不偏移</option></select><svg class="absolute top-[9px] right-[2px] h-[3px] w-[6px]"><use href="#dd"/></svg></div>
  <label class="relative flex shrink-0 text-[#888]"><span class="w-[17px] pt-px">X=</span><input value="0" class="h-[22px] w-[61px] border-2 border-[#a9acb0] bg-white pl-[2px]"><svg class="absolute top-[5px] right-1 h-3 w-[6px]"><use href="#spin"/></svg></label>
  <span class="w-[27px] pt-px pl-px text-[#777]">mm</span>
  <label class="relative flex shrink-0 text-[#888]"><span class="w-4 pt-px">Y=</span><input value="0" class="h-[22px] w-[61px] border-2 border-[#a9acb0] bg-white pl-[2px]"><svg class="absolute top-[5px] right-1 h-3 w-[6px]"><use href="#spin"/></svg></label>
  <span class="pt-px pl-px text-[#777]">mm</span>
</section>

<main class="flex min-h-0 flex-1">
  <!-- navigation of the main window, partly covered by the definition window -->
  <aside class="w-[35px] shrink-0 overflow-hidden border-t-[3px] border-[#b9bcc1] bg-white whitespace-nowrap">
    <div class="mb-1 flex h-[31px] items-center border-b border-[#c5c8ce] bg-[#efefef]"><svg class="h-[6px] w-[5px]" viewBox="0 0 5 6"><path d="M0 3h5M1.500 0v6" stroke="#3f87d9" stroke-width="1.500"/></svg></div>
    <ul class="*:flex *:h-6 *:items-center *:gap-[5px]">
      <li><svg class="-ml-2 size-[14px] shrink-0"><use href="#folder"/></svg>常用</li>
      <li><svg class="-ml-2 size-[14px] shrink-0"><use href="#folder"/></svg>轴线</li>
      <li><svg class="-ml-2 size-[14px] shrink-0"><use href="#foldo"/></svg>柱</li>
      <li><span class="ml-[7px] flex h-[21px] items-center gap-2 bg-[#c9daf0] pl-[5px]"><svg class="h-4 w-[14px] shrink-0"><use href="#col"/></svg>柱</span></li>
      <li><span class="ml-[7px] flex h-[21px] items-center gap-2 pl-[5px]"><svg class="h-4 w-[14px] shrink-0"><use href="#gcol"/></svg>构</span></li>
      <li><span class="ml-[7px] flex h-[21px] items-center gap-2 pl-[5px]"><svg class="h-4 w-[14px] shrink-0"><use href="#bcol"/></svg>砌</span></li>
      <li><svg class="-ml-2 size-[14px] shrink-0"><use href="#folder"/></svg>墙</li>
      <li><svg class="-ml-2 size-[14px] shrink-0"><use href="#folder"/></svg>门窗</li>
      <li><svg class="-ml-2 size-[14px] shrink-0"><use href="#folder"/></svg>梁</li>
      <li><svg class="-ml-2 size-[14px] shrink-0"><use href="#folder"/></svg>板</li>
      <li><svg class="-ml-2 size-[14px] shrink-0"><use href="#folder"/></svg>楼梯</li>
      <li><svg class="-ml-2 size-[14px] shrink-0"><use href="#folder"/></svg>装修</li>
      <li><svg class="-ml-2 size-[14px] shrink-0"><use href="#folder"/></svg>土方</li>
      <li><svg class="-ml-2 size-[14px] shrink-0"><use href="#foldo"/></svg>基础</li>
      <li class="pl-[11px]"><svg class="mr-px size-4 shrink-0"><use href="#beam"/></svg>基</li>
      <li class="pl-[11px]"><svg class="mr-px size-4 shrink-0"><use href="#raft"/></svg>筏</li>
      <li class="pl-[11px]"><svg class="mr-px size-4 shrink-0"><use href="#cross"/></svg>筏</li>
      <li class="pl-[11px]"><svg class="mr-px size-4 shrink-0"><use href="#box3"/></svg>筏</li>
      <li class="pl-[11px]"><svg class="mr-px size-4 shrink-0"><use href="#strip"/></svg>基</li>
      <li class="pl-[11px]"><svg class="mr-px size-4 shrink-0"><use href="#pit"/></svg>集</li>
      <li class="pl-[11px]"><svg class="mr-px size-4 shrink-0"><use href="#cush"/></svg>柱</li>
      <li class="pl-[11px]"><svg class="mr-px size-4 shrink-0"><use href="#foot"/></svg>独</li>
      <li class="pl-[11px]"><svg class="mr-px size-4 shrink-0"><use href="#foot2"/></svg>条</li>
      <li class="pl-[11px]"><svg class="mr-px size-4 shrink-0"><use href="#pile"/></svg>桩</li>
    </ul>
  </aside>

  <!-- definition window -->
  <section class="flex min-w-0 flex-1 flex-col bg-white">
    <h2 class="flex h-[27px] shrink-0 items-center bg-[#2c7fe0] pl-2 text-white">定义<span class="ml-auto h-[2px] w-[2px] bg-white"></span></h2>
    <div class="flex h-[27px] shrink-0 items-center border-y border-[#c5c8ce] pl-[3px] whitespace-nowrap text-[#333] *:shrink-0">
      <div class="relative mr-px w-[99px] border border-[#a0a3a7] bg-white pl-[3px] text-black"><select aria-label="定义工程" class="h-5 w-full appearance-none"><option>单项工程-1</option></select><svg class="absolute top-[9px] right-1 h-[3px] w-[6px]"><use href="#dd"/></svg></div>
      <div class="relative w-[100px] border border-[#a0a3a7] bg-white pl-[3px] text-black"><select aria-label="定义楼层" class="h-5 w-full appearance-none"><option>基础层</option></select><svg class="absolute top-[9px] right-1 h-[3px] w-[6px]"><use href="#dd"/></svg></div>
      <span class="mr-[9px] ml-[2px] h-4 w-px bg-[#c5c8ce]"></span>
      <button class="mr-[13px] flex items-center gap-[3px]"><svg class="size-4"><use href="#layers"/></svg>层间复制</button>
      <button class="mr-[9px] flex items-center gap-[3px]"><svg class="size-4"><use href="#store"/></svg>存档<svg class="ml-[5px] h-[3px] w-[6px]"><use href="#dd"/></svg></button>
      <button class="mr-[14px] flex items-center gap-[3px]"><svg class="size-4"><use href="#prefix"/></svg>添加前后缀</button>
      <button class="mr-[10px] flex items-center gap-[3px]"><svg class="size-4"><use href="#delun"/></svg>删除未使用构件</button>
      <span class="mr-[9px] h-4 w-px bg-[#c5c8ce]"></span>
      <button class="mr-[14px] flex items-center gap-[3px]"><svg class="size-4"><use href="#dcheck"/></svg>检查做法</button>
      <button class="mr-[14px] flex items-center gap-[3px]"><svg class="size-4"><use href="#dgear"/></svg>自动套方案维护</button>
      <button class="flex items-center gap-[3px]"><svg class="size-4"><use href="#batch"/></svg>批量自动套做法</button>
    </div>

    <div class="flex min-h-0 flex-1">
      <!-- navigation tree -->
      <section class="w-[183px] shrink-0 border-r border-l-2 border-[#c5c8ce]">
        <div class="h-[10px] bg-[#d3d5da]"></div>
        <h3 class="flex h-[23px] items-center border-b-2 border-[#c5c8ce] bg-[#efefef] pl-[7px] font-bold text-[#777]">导航树</h3>
        <ul class="pt-1 whitespace-nowrap *:flex *:h-6 *:items-center *:gap-[5px] *:pl-[5px]">
          <li><svg class="size-[14px]"><use href="#folder"/></svg>常用构件类型</li>
          <li><svg class="size-[14px]"><use href="#folder"/></svg>轴线</li>
          <li><svg class="size-[14px]"><use href="#foldo"/></svg>柱</li>
          <li><span class="ml-[15px] flex h-[21px] w-[155px] items-center gap-[7px] bg-[#c9daf0] pl-[5px]"><svg class="h-4 w-[14px]"><use href="#col"/></svg>柱(Z)</span></li>
          <li><span class="ml-[15px] flex h-[21px] items-center gap-[7px] pl-[5px]"><svg class="h-4 w-[14px]"><use href="#gcol"/></svg>构造柱(Z)</span></li>
          <li><span class="ml-[15px] flex h-[21px] items-center gap-[7px] pl-[5px]"><svg class="h-4 w-[14px]"><use href="#bcol"/></svg>砌体柱(Z)</span></li>
          <li><svg class="size-[14px]"><use href="#folder"/></svg>墙</li>
          <li><svg class="size-[14px]"><use href="#folder"/></svg>门窗洞</li>
          <li><svg class="size-[14px]"><use href="#folder"/></svg>梁</li>
          <li><svg class="size-[14px]"><use href="#folder"/></svg>板</li>
          <li><svg class="size-[14px]"><use href="#folder"/></svg>楼梯</li>
          <li><svg class="size-[14px]"><use href="#folder"/></svg>装修</li>
          <li><svg class="size-[14px]"><use href="#folder"/></svg>土方</li>
          <li><svg class="size-[14px]"><use href="#folder"/></svg>基础</li>
          <li><svg class="size-[14px]"><use href="#folder"/></svg>其它</li>
          <li><svg class="size-[14px]"><use href="#folder"/></svg>自定义</li>
        </ul>
      </section>

      <!-- component list and properties -->
      <div class="ml-1 flex w-[318px] shrink-0 flex-col">
        <section class="flex min-h-0 flex-1 flex-col border-x border-b border-[#c5c8ce]">
          <div class="h-[10px] shrink-0 bg-[#d3d5da]"></div>
          <h3 class="flex h-[22px] shrink-0 items-center border-b border-[#c5c8ce] bg-[#efefef] pl-[7px] font-bold text-[#777]">构件列表</h3>
          <div class="flex h-[30px] shrink-0 items-center border-b border-[#c5c8ce] bg-[#efefef] pl-1 text-[#333]">
            <button class="mr-[11px] flex items-center gap-[3px]"><svg class="size-4"><use href="#newdoc"/></svg>新建<svg class="ml-[5px] h-[3px] w-[6px]"><use href="#dd"/></svg></button>
            <button class="mr-[15px] flex items-center gap-[3px]"><svg class="size-4"><use href="#deldoc"/></svg>删除</button>
            <button class="flex items-center gap-[3px]"><svg class="size-4"><use href="#cpdoc"/></svg>复制</button>
          </div>
          <label class="flex h-5 shrink-0 items-center border-b-2 border-[#c5c8ce] pr-[5px] pl-[2px] text-[#1e80b8]"><input aria-label="搜索构件" placeholder="搜索构件..." class="min-w-0 flex-1 placeholder:text-[#888]"><svg class="size-3"><use href="#search"/></svg></label>
          <ul class="*:flex *:h-[21px] *:items-center">
            <li class="gap-2 pl-[9px]"><svg class="size-[7px]"><use href="#tri"/></svg>柱</li>
            <li class="gap-2 pl-[29px]"><svg class="size-[7px]"><use href="#tri"/></svg>框架柱</li>
            <li class="pl-[64px]">KZ-1</li>
            <li class="pl-[60px]"><span class="bg-[#c9daf0] px-1 leading-[21px]">KZ-2</span></li>
          </ul>
        </section>
        <section class="mt-1 h-[181px] shrink-0 overflow-hidden border-x border-[#c5c8ce]">
          <div class="h-[10px] bg-[#d3d5da]"></div>
          <h3 class="flex h-[23px] items-center border-b-2 border-[#c5c8ce] bg-[#efefef] pl-[7px] font-bold text-[#777]">属性列表</h3>
          <div class="flex items-start">
            <table class="w-[301px] table-fixed border-separate border-spacing-0 **:[td]:h-[21px] **:[td]:border-r **:[td]:border-b **:[td]:border-[#c5c8ce] **:[td]:px-[3px] **:[td]:py-0">
              <colgroup><col class="w-[22px]"><col class="w-[101px]"><col class="w-[139px]"><col class="w-[39px]"></colgroup>
              <thead class="bg-[#efefef] text-[#333] **:[th]:h-5 **:[th]:border-r **:[th]:border-b **:[th]:border-[#c5c8ce] **:[th]:p-0 **:[th]:font-normal"><tr><th class="bg-white"></th><th>属性名称</th><th>属性值</th><th>附加</th></tr></thead>
              <tbody class="whitespace-nowrap">
                <tr><td class="bg-[#efefef] text-center text-[#444]">1</td><td class="text-[#1a5cff]">名称</td><td>KZ-2</td><td></td></tr>
                <tr><td class="bg-[#efefef] text-center text-[#444]">2</td><td class="text-[#1a5cff]">结构类别</td><td>框架柱</td><td><input type="checkbox" aria-label="附加结构类别" class="ml-[8px] block size-[14px] appearance-none rounded-[3px] border border-[#777] bg-white"></td></tr>
                <tr><td class="bg-[#efefef] text-center text-[#444]">3</td><td class="text-[#1a5cff]">定额类别</td><td>普通柱</td><td><input type="checkbox" aria-label="附加定额类别" class="ml-[8px] block size-[14px] appearance-none rounded-[3px] border border-[#777] bg-white"></td></tr>
                <tr><td class="bg-[#efefef] text-center text-[#444]">4</td><td class="text-[#1a5cff]">截面宽度(B边)(...</td><td>400</td><td><input type="checkbox" aria-label="附加截面宽度" class="ml-[8px] block size-[14px] appearance-none rounded-[3px] border border-[#777] bg-white"></td></tr>
                <tr><td class="bg-[#efefef] text-center text-[#444]">5</td><td class="text-[#1a5cff]">截面高度(H边)(...</td><td>400</td><td><input type="checkbox" aria-label="附加截面高度" class="ml-[8px] block size-[14px] appearance-none rounded-[3px] border border-[#777] bg-white"></td></tr>
                <tr><td class="bg-[#efefef] text-center text-[#444]">6</td><td class="text-[#1a5cff]">全部纵筋</td><td></td><td><input type="checkbox" aria-label="附加全部纵筋" class="ml-[8px] block size-[14px] appearance-none rounded-[3px] border border-[#777] bg-white"></td></tr>
                <tr><td class="bg-[#efefef]"></td><td></td><td></td><td></td></tr>
              </tbody>
            </table>
            <div class="ml-auto w-[13px] pt-[2px]"><svg class="ml-1 h-1 w-[7px] rotate-180"><use href="#dd"/></svg><div class="mt-[3px] h-40 rounded-t bg-[#cacaca]"></div></div>
          </div>
        </section>
      </div>

      <!-- work method editor -->
      <section class="ml-1 flex min-w-0 flex-1 flex-col overflow-hidden border-l border-[#c5c8ce]">
        <div class="h-[10px] shrink-0 bg-[#d3d5da]"></div>
        <div class="flex h-[22px] shrink-0 border-b border-[#c5c8ce] bg-[#efefef] font-bold">
          <button class="w-[65px] border-r border-[#c5c8ce] bg-[#e2e2e2] text-[#999]">截面编辑</button>
          <button class="w-[65px] border-r border-[#c5c8ce] text-[#333]">构件做法</button>
        </div>
        <div class="flex h-[30px] shrink-0 items-center border-b border-[#c5c8ce] bg-[#efefef] pl-[3px] whitespace-nowrap text-[#333] *:flex *:shrink-0 *:items-center *:gap-[4px]">
          <button class="mr-[14px]"><svg class="size-4"><use href="#addl"/></svg>添加清单</button>
          <button class="mr-[14px]"><svg class="size-4"><use href="#addq"/></svg>添加定额</button>
          <button class="mr-[14px]"><svg class="size-4"><use href="#deldoc"/></svg>删除</button>
          <button class="mr-[10px]"><svg class="size-4"><use href="#query"/></svg>查询<svg class="ml-[4px] h-[3px] w-[6px]"><use href="#dd"/></svg></button>
          <button class="mr-[14px]"><svg class="size-4"><use href="#feat"/></svg>项目特征</button>
          <button class="mr-[13px]"><i class="w-[14px] font-['Liberation_Serif',serif] text-[17px] text-[#3f87d9]">fx</i>换算<svg class="ml-[4px] h-[3px] w-[6px]"><use href="#dd"/></svg></button>
          <button class="mr-[14px]"><svg class="size-4"><use href="#mbrush"/></svg>做法刷</button>
          <button class="mr-[13px]"><svg class="size-4"><use href="#dq"/></svg>做法查询</button>
          <button class="mr-[14px]"><svg class="size-4"><use href="#ext2"/></svg>提取做法</button>
          <button><svg class="size-4"><use href="#cur"/></svg>当前构件自动套做法</button>
        </div>
        <table class="w-full shrink-0 table-fixed border-separate border-spacing-0 whitespace-nowrap **:[td]:h-[22px] **:[td]:border-r **:[td]:border-b **:[td]:border-[#c5c8ce] **:[td]:p-0 **:[th]:h-[21px] **:[th]:border-r **:[th]:border-b **:[th]:border-[#c5c8ce] **:[th]:p-0">
          <colgroup><col class="w-[21px]"><col class="w-[111px]"><col class="w-[46px]"><col class="w-[201px]"><col class="w-[201px]"><col class="w-[46px]"><col class="w-[101px]"><col class="w-[151px]"><col class="w-[71px]"><col></colgroup>
          <thead class="bg-[#efefef]"><tr><th></th><th class="font-normal">编码</th><th class="font-normal">类别</th><th class="font-normal">名称</th><th class="font-normal">项目特征</th><th class="font-normal">单位</th><th class="bg-[#acd5fe] font-bold">工程量表达式</th><th class="font-normal">表达式说明</th><th class="font-normal">单价</th><th class="font-normal">综合单价</th></tr></thead>
          <tbody class="bg-[#aee9fa]"><tr><td class="bg-[#acd5fe] text-center font-bold">1</td><td><span class="pl-px font-['Liberation_Mono',monospace] text-[10px]">010402001</span></td><td class="text-center">借项</td><td><span class="pl-px">矩形柱</span></td><td></td><td class="text-center font-['Liberation_Mono',monospace] text-[10px]">m3</td>
          <td class="bg-white"><div class="relative border-b border-[#3aa5d8]"><select aria-label="工程量表达式" class="block h-[20px] w-full appearance-none pl-1 text-[#555]"><option>更多...</option></select><svg class="absolute top-2 right-[7px] h-[6px] w-[9px]" viewBox="0 0 9 6"><path d="M0 0h9L4.500 6z" fill="#4d9ac8"/></svg></div></td><td></td><td></td><td></td></tr></tbody>
        </table>
        <div class="min-h-0 flex-1"></div>
        <div class="mb-[3px] h-2 w-[897px] shrink-0 rounded-full bg-[#cacaca]"></div>
        <div class="h-[151px] shrink-0 border-t border-[#c5c8ce]">
          <div class="h-[36px] border-b border-[#8c9096] bg-[#efefef]"></div>
          <table class="w-[655px] table-fixed border-separate border-spacing-0 **:[td]:h-[19px] **:[td]:border-r **:[td]:border-b **:[td]:border-[#d0d0d0] **:[td]:p-0 **:[th]:h-[21px] **:[th]:border-r **:[th]:border-[#d0d0d0] **:[th]:p-0 **:[th]:font-normal">
            <colgroup><col><col class="w-[46px]"></colgroup>
            <thead><tr><th class="border-b-2 border-b-[#3aa5d8] bg-[#ffecb0]"></th><th class="border-b">单位</th></tr></thead>
            <tbody class="font-['Liberation_Mono',monospace] text-[10px]">
              <tr><td><div class="h-[18px] border-r-2 border-b-2 border-[#808080]"></div></td><td><span class="pl-[2px]">m3</span></td></tr>
              <tr><td></td><td><span class="pl-[2px]">m3</span></td></tr>
            </tbody>
          </table>
        </div>
      </section>
    </div>
  </section>
</main>

<!-- quantity expression window -->
<section role="dialog" aria-label="工程量表达式" class="absolute top-[393px] bottom-0 left-[534px] flex w-[582px] flex-col border-x border-[#c0c6d0] bg-[#efefef]">
  <div class="-mx-px flex h-[27px] shrink-0 items-center bg-[#2c7fe0] pr-[10px] pl-2 text-white">
    <h2 class="mr-auto">工程量表达式</h2>
    <button aria-label="最小化" class="mr-[20px] pt-1"><svg class="h-[8px] w-[8px]" viewBox="0 0 8 8"><path d="M0 5h8" stroke="#fff" stroke-width="2"/></svg></button>
    <button aria-label="最大化" class="mr-[19px]"><svg class="h-[7px] w-[8px]" viewBox="0 0 8 7"><path d="M.500.500h7v6h-7z" fill="none" stroke="#fff"/><path d="M0 1h8" stroke="#fff" stroke-width="2"/></svg></button>
    <button aria-label="关闭"><svg class="h-[8px] w-[9px]" viewBox="0 0 9 8"><path d="m.500 0 8 8m0-8-8 8" stroke="#fff" stroke-width="1.500"/></svg></button>
  </div>
  <textarea aria-label="表达式" class="mx-[9px] mt-[9px] block h-[60px] shrink-0 resize-none border border-t-[#aaa] border-r-[#dde0e4] border-b-[#dde0e4] border-l-[#dde0e4] bg-white"></textarea>
  <div class="mx-[9px] flex h-[29px] shrink-0 items-center justify-between pr-4"><h3>代码列表</h3><label class="flex items-center gap-[7px]"><input type="checkbox" class="size-[14px] appearance-none rounded-[2px] border border-[#777] bg-white">显示中间量</label></div>
  <div class="mx-[9px] min-h-0 flex-1 border border-b-0 border-[#c0c3c8] bg-white">
    <table class="w-[503px] table-fixed border-separate border-spacing-0 **:[td]:h-[22px] **:[td]:border-r **:[td]:border-b **:[td]:border-[#bcc8d4] **:[td]:px-[3px] **:[td]:py-0 **:[th]:h-[21px] **:[th]:border-r **:[th]:border-b **:[th]:border-[#bcc8d4] **:[th]:p-0">
      <colgroup><col class="w-[21px]"><col class="w-[241px]"><col class="w-[241px]"></colgroup>
      <thead class="bg-[#acd5fe]"><tr><th class="bg-[#efefef]"></th><th>工程量名称</th><th>工程量代码</th></tr></thead>
      <tbody class="bg-[#aee9fa]">
        <tr><td class="bg-[#acd5fe] text-center font-bold">1</td><td class="shadow-[inset_0_-1px_0_#808080]">周长</td><td class="bg-[#acd5fe] shadow-[inset_-1px_-1px_0_#808080]">ZC</td></tr>
        <tr><td class="bg-[#efefef] text-center">2</td><td>体积</td><td>TJ</td></tr>
        <tr><td class="bg-[#efefef] text-center">3</td><td>模板面积</td><td>MBMJ</td></tr>
        <tr><td class="bg-[#efefef] text-center">4</td><td>超高模板面积</td><td>CGMBMJ</td></tr>
        <tr><td class="bg-[#efefef] text-center">5</td><td>数量</td><td>SL</td></tr>
        <tr><td class="bg-[#efefef] text-center">6</td><td>脚手架面积</td><td>JSJMJ</td></tr>
        <tr><td class="bg-[#efefef] text-center">7</td><td>高度</td><td>GD</td></tr>
        <tr><td class="bg-[#efefef] text-center">8</td><td>截面面积</td><td>JMMJZ</td></tr>
      </tbody>
    </table>
  </div>
</section>

<!-- red step annotations -->
<svg class="pointer-events-none absolute top-0 left-0 h-[780px] w-[1559px]" viewBox="0 0 1559 780" fill="none" stroke="#fe0000" stroke-width="3">
  <path d="M157.500 20.500h51v24h-51zM334.500 43.500h47v20h-47zM270.500 356.500h56v34h-56zM1175.500 278.500h91v52h-91zM539.500 513.500h542v216h-542z"/>
  <path d="M220 33 302 54M334 69 291 317M296 342 1112 314M1193 332 1107 497"/>
  <path d="m300 46-7 13 37 3zM285 315l12 2-11 34zM1110 308v12l36-7zM1102 492l11 7-20 28z" fill="#fe0000" stroke-width="1"/>
</svg>
</body>
</html>
